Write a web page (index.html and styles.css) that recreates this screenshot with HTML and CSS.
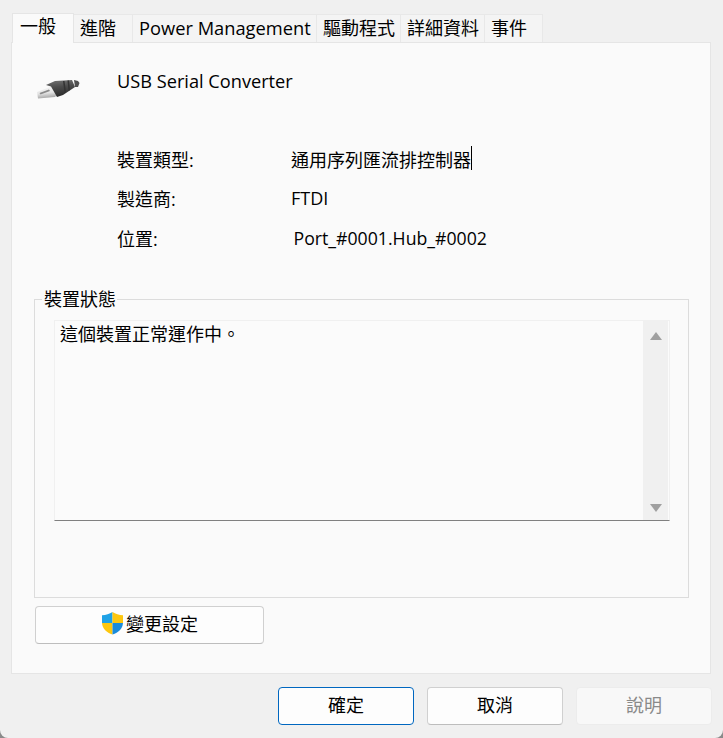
FILE: index.html
```html
<!DOCTYPE html>
<html lang="zh-Hant">
<head>
<meta charset="utf-8">
<title>USB Serial Converter</title>
<link rel="stylesheet" href="styles.css">
</head>
<body>
<div class="window">
  <div class="tabs">
    <div class="tab tab-general active">一般</div>
    <div class="tab tab-advanced">進階</div>
    <div class="tab tab-power">Power Management</div>
    <div class="tab tab-driver">驅動程式</div>
    <div class="tab tab-details">詳細資料</div>
    <div class="tab tab-events">事件</div>
  </div>
  <div class="panel">
    <div class="device">
      <svg class="usb" width="44" height="22" viewBox="0 0 44 22">
        <defs>
          <linearGradient id="plug" x1="0" y1="0" x2="0.2" y2="1">
            <stop offset="0" stop-color="#f8f8f8"/><stop offset="0.6" stop-color="#e4e4e4"/><stop offset="1" stop-color="#a8a8a8"/>
          </linearGradient>
          <linearGradient id="body" x1="0" y1="0" x2="0.15" y2="1">
            <stop offset="0" stop-color="#757575"/><stop offset="0.45" stop-color="#4c4c4c"/><stop offset="1" stop-color="#2c2c2c"/>
          </linearGradient>
        </defs>
        <path d="M1 14 L15 8.500 L21 17 L19 19 L2 20.500 Z" fill="url(#plug)"/>
        <path d="M3.500 15 L13 11.500 L14 13 L4.500 16.500 Z" fill="#8a8a8a"/>
        <path d="M10 7 L19 3 L36 2 L39 9 L27 17 L21 19 L15 8.500 Z" fill="url(#body)"/>
        <path d="M27 3 L28.500 3 L30 14 L28.500 15 Z M31.500 2.500 L33 2.500 L34 12 L32.500 13 Z" fill="#333"/>
        <path d="M38 2 L42 3 L43.500 5 L42 9 L39 9 Z" fill="#505050"/>
      </svg>
      <div class="device-name">USB Serial Converter</div>
    </div>
    <div class="info">
      <div class="row"><span class="label">裝置類型:</span><span class="value">通用序列匯流排控制器<i class="caret"></i></span></div>
      <div class="row"><span class="label">製造商:</span><span class="value">FTDI</span></div>
      <div class="row"><span class="label">位置:</span><span class="value value-port">Port_#0001.Hub_#0002</span></div>
    </div>
    <fieldset class="group">
      <legend class="legend">裝置狀態</legend>
      <div class="status">
        <div class="status-text">這個裝置正常運作中。</div>
        <div class="scrollbar">
          <svg width="14" height="10" viewBox="0 0 14 10"><path d="M7 1 L13 9 L1 9 Z" fill="#a0a0a0"/></svg>
          <svg width="14" height="10" viewBox="0 0 14 10"><path d="M1 1 L13 1 L7 9 Z" fill="#a0a0a0"/></svg>
        </div>
      </div>
    </fieldset>
    <button class="btn btn-change" type="button">
      <svg class="shield" width="23" height="24" viewBox="0 0 23 24">
        <path d="M11.500 1 C8.500 3 5 4 1 4.300 L1 12 L11.500 12 Z" fill="#1fa2e6"/>
        <path d="M11.500 1 C14.500 3 18 4 22 4.300 L22 12 L11.500 12 Z" fill="#fdc70f"/>
        <path d="M1 12 L11.500 12 L11.500 23.500 C5.500 21.500 1.500 18 1 12 Z" fill="#fdc70f"/>
        <path d="M22 12 L11.500 12 L11.500 23.500 C17.500 21.500 21.500 18 22 12 Z" fill="#1a8bdc"/>
      </svg>
      <span class="btn-label">變更設定</span>
    </button>
  </div>
  <div class="footer">
    <button class="btn btn-footer btn-default" type="button">確定</button>
    <button class="btn btn-footer" type="button">取消</button>
    <button class="btn btn-footer btn-disabled" type="button">說明</button>
  </div>
</div>
</body>
</html>
```
FILE: styles.css
```css
* { box-sizing: border-box; }
html, body { margin: 0; padding: 0; }
body {
  width: 723px;
  height: 738px;
  overflow: hidden;
  background: #8a8a8a;
  font-family: "Open Sans", "Noto Sans CJK TC", sans-serif;
  font-size: 18px;
  color: #000;
}
.window {
  width: 723px;
  height: 738px;
  background: #f0f0f0;
  border-radius: 0 0 8px 8px;
  padding: 14px 11px 0 11px;
  display: flex;
  flex-direction: column;
}
.tabs {
  display: flex;
  height: 29px;
  padding-left: 1px;
  position: relative;
  z-index: 1;
}
.tab {
  height: 28px;
  background: #f4f4f4;
  border: 1px solid #e8e8e8;
  border-left: 0;
  border-bottom: 0;
  padding-left: 6px;
  line-height: 26px;
  white-space: nowrap;
}
.tab-general { width: 62px; }
.tab-advanced { width: 59px; }
.tab-power { width: 184px; font-size: 18.300px; }
.tab-driver { width: 84px; }
.tab-details { width: 84px; }
.tab-events { width: 58px; }
.tab.active {
  height: 30px;
  margin-top: -1px;
  background: #fafafa;
  border: 1px solid #e5e5e5;
  border-bottom: 0;
  padding-left: 7px;
  line-height: 24px;
}
.panel {
  width: 700px;
  height: 632px;
  margin-top: -1px;
  background: #fafafa;
  border: 1px solid #e5e5e5;
  padding: 0 22px;
  flex: none;
}
.device {
  display: flex;
  height: 86px;
  padding-top: 25px;
}
.usb { margin-left: 2px; flex: none; margin-top: 10px; }
.device-name {
  margin-left: 37px;
  line-height: 26px;
  font-size: 18.200px;
}
.info { padding-left: 83px; height: 151px; }
.row {
  display: flex;
  height: 39.500px;
  align-items: center;
}
.row:first-child { margin-top: 10px; }
.label { width: 174px; flex: none; }
.value { position: relative; white-space: nowrap; }
.value-port { margin-left: 2.500px; font-size: 17.700px; }
.caret {
  position: absolute;
  right: -1px;
  top: 0;
  width: 1px;
  height: 24px;
  background: #000;
}
.group {
  margin: 0;
  padding: 0 18px 0 19px;
  width: 655px;
  height: 308px;
  border: 1px solid #dcdcdc;
  min-inline-size: 0;
}
.legend {
  margin-left: -12px;
  padding: 0 1px 0 2px;
  line-height: 18px;
}
.status {
  display: flex;
  height: 201px;
  margin-top: 12px;
  background: #fbfbfb;
  border: 1px solid #f0f0f0;
  border-bottom: 1px solid #808080;
}
.status-text {
  flex: 1;
  padding: 1px 5px;
  line-height: 24px;
}
.scrollbar {
  width: 25px;
  background: #f0f0f0;
  margin-right: 1px;
  padding: 10px 0 7px;
  display: flex;
  flex-direction: column;
  justify-content: space-between;
  align-items: center;
}
.btn {
  font: inherit;
  color: #000;
  background: #fdfdfd;
  border: 1px solid #d0d0d0;
  border-bottom-color: #bdbdbd;
  border-radius: 4px;
  padding: 0 0 5px;
  display: flex;
  align-items: center;
  justify-content: center;
}
.btn-change {
  width: 229px;
  height: 38px;
  margin: 8px 0 0 1px;
  padding-bottom: 4px;
}
.shield { flex: none; margin-right: 2px; }
.footer {
  display: flex;
  gap: 13px;
  justify-content: flex-end;
  margin-top: 13px;
}
.btn-footer { width: 136px; height: 38px; }
.btn-default { border: 1px solid #0067c0; }
.btn-disabled {
  background: #f8f8f8;
  color: #8a8a8a;
  border-color: #ececec;
}
```
